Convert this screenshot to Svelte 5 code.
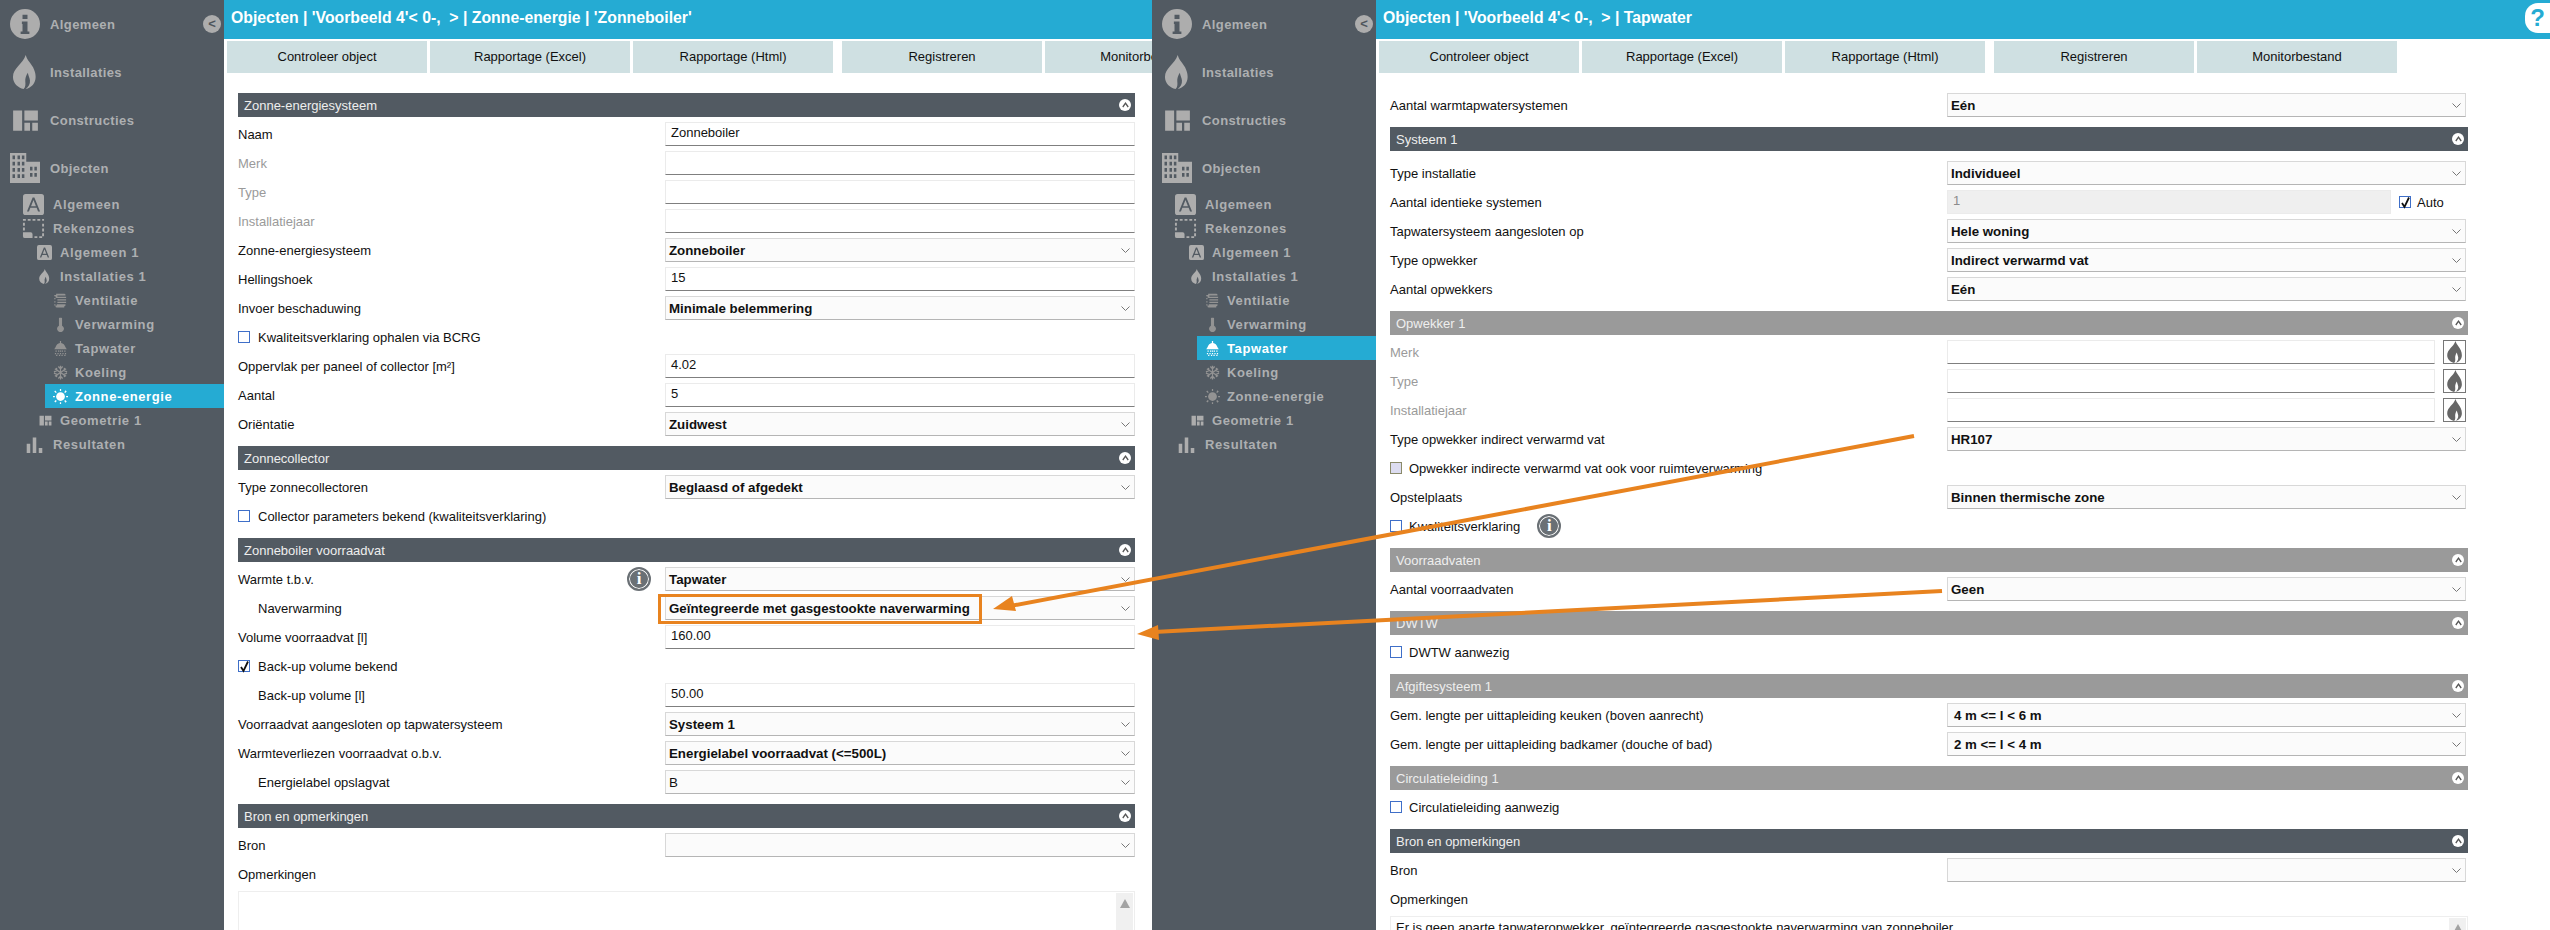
<script>
  const sidebarTop = [
    { label: 'Algemeen', icon: 'info', size: 30 },
    { label: 'Installaties', icon: 'flame', size: 34 },
    { label: 'Constructies', icon: 'constr', size: 27 },
    { label: 'Objecten', icon: 'building', size: 30 }
  ];

  const tree = (active) => [
    { label: 'Algemeen', icon: 'a', size: 21, ix: 23, tx: 53 },
    { label: 'Rekenzones', icon: 'zones', size: 23, ix: 22, tx: 53 },
    { label: 'Algemeen 1', icon: 'a', size: 15, ix: 37, tx: 60 },
    { label: 'Installaties 1', icon: 'flame', size: 15, ix: 37, tx: 60 },
    { label: 'Ventilatie', icon: 'vent', size: 15, ix: 53, tx: 75, dim: true },
    { label: 'Verwarming', icon: 'thermo', size: 15, ix: 53, tx: 75, dim: true },
    { label: 'Tapwater', icon: 'shower', size: 15, ix: 53, tx: 75, dim: true, active: active === 'Tapwater' },
    { label: 'Koeling', icon: 'snow', size: 15, ix: 53, tx: 75, dim: true },
    { label: 'Zonne-energie', icon: 'sun', size: 15, ix: 53, tx: 75, dim: true, active: active === 'Zonne-energie' },
    { label: 'Geometrie 1', icon: 'constr', size: 13, ix: 39, tx: 60 },
    { label: 'Resultaten', icon: 'bars', size: 17, ix: 26, tx: 53 }
  ];

  const tabs = ['Controleer object', 'Rapportage (Excel)', 'Rapportage (Html)', 'Registreren', 'Monitorbestand'];

  const leftRows = [
    { t: 'section', label: 'Zonne-energiesysteem' },
    { t: 'input', label: 'Naam', value: 'Zonneboiler' },
    { t: 'input', label: 'Merk', muted: true },
    { t: 'input', label: 'Type', muted: true },
    { t: 'input', label: 'Installatiejaar', muted: true },
    { t: 'select', label: 'Zonne-energiesysteem', value: 'Zonneboiler' },
    { t: 'input', label: 'Hellingshoek', value: '15' },
    { t: 'select', label: 'Invoer beschaduwing', value: 'Minimale belemmering' },
    { t: 'check', label: 'Kwaliteitsverklaring ophalen via BCRG' },
    { t: 'input', label: 'Oppervlak per paneel of collector [m²]', value: '4.02' },
    { t: 'input', label: 'Aantal', value: '5' },
    { t: 'select', label: 'Oriëntatie', value: 'Zuidwest' },
    { t: 'section', label: 'Zonnecollector' },
    { t: 'select', label: 'Type zonnecollectoren', value: 'Beglaasd of afgedekt' },
    { t: 'check', label: 'Collector parameters bekend (kwaliteitsverklaring)' },
    { t: 'section', label: 'Zonneboiler voorraadvat' },
    { t: 'select', label: 'Warmte t.b.v.', value: 'Tapwater', info: true },
    { t: 'select', label: 'Naverwarming', value: 'Geïntegreerde met gasgestookte naverwarming', indent: true, mark: true },
    { t: 'input', label: 'Volume voorraadvat [l]', value: '160.00' },
    { t: 'check', label: 'Back-up volume bekend', checked: true },
    { t: 'input', label: 'Back-up volume [l]', value: '50.00', indent: true },
    { t: 'select', label: 'Voorraadvat aangesloten op tapwatersysteem', value: 'Systeem 1' },
    { t: 'select', label: 'Warmteverliezen voorraadvat o.b.v.', value: 'Energielabel voorraadvat (<=500L)' },
    { t: 'select', label: 'Energielabel opslagvat', value: 'B', indent: true, plain: true },
    { t: 'section', label: 'Bron en opmerkingen' },
    { t: 'select', label: 'Bron', value: '' },
    { t: 'text', label: 'Opmerkingen' }
  ];

  const rightRows = [
    { t: 'select', label: 'Aantal warmtapwatersystemen', value: 'Eén' },
    { t: 'section', label: 'Systeem 1', extra: true },
    { t: 'select', label: 'Type installatie', value: 'Individueel' },
    { t: 'auto', label: 'Aantal identieke systemen', value: '1' },
    { t: 'select', label: 'Tapwatersysteem aangesloten op', value: 'Hele woning' },
    { t: 'select', label: 'Type opwekker', value: 'Indirect verwarmd vat' },
    { t: 'select', label: 'Aantal opwekkers', value: 'Eén' },
    { t: 'section', label: 'Opwekker 1', grey: true },
    { t: 'flame', label: 'Merk', muted: true },
    { t: 'flame', label: 'Type', muted: true },
    { t: 'flame', label: 'Installatiejaar', muted: true },
    { t: 'select', label: 'Type opwekker indirect verwarmd vat', value: 'HR107' },
    { t: 'check', label: 'Opwekker indirecte verwarmd vat ook voor ruimteverwarming', disabled: true },
    { t: 'select', label: 'Opstelplaats', value: 'Binnen thermische zone' },
    { t: 'check', label: 'Kwaliteitsverklaring', info: true },
    { t: 'section', label: 'Voorraadvaten', grey: true },
    { t: 'select', label: 'Aantal voorraadvaten', value: 'Geen' },
    { t: 'section', label: 'DWTW', grey: true },
    { t: 'check', label: 'DWTW aanwezig' },
    { t: 'section', label: 'Afgiftesysteem 1', grey: true },
    { t: 'select', label: 'Gem. lengte per uittapleiding keuken (boven aanrecht)', value: '4 m <= l < 6 m', pad: true },
    { t: 'select', label: 'Gem. lengte per uittapleiding badkamer (douche of bad)', value: '2 m <= l < 4 m', pad: true },
    { t: 'section', label: 'Circulatieleiding 1', grey: true },
    { t: 'check', label: 'Circulatieleiding aanwezig' },
    { t: 'section', label: 'Bron en opmerkingen' },
    { t: 'select', label: 'Bron', value: '' },
    { t: 'text', label: 'Opmerkingen', value: 'Er is geen aparte tapwateropwekker, geïntegreerde gasgestookte naverwarming van zonneboiler' }
  ];

  const panels = [
    { cls: 'left', title: "Objecten | 'Voorbeeld 4'< 0-,  > | Zonne-energie | 'Zonneboiler'", active: 'Zonne-energie', rows: leftRows },
    { cls: 'right', title: "Objecten | 'Voorbeeld 4'< 0-,  > | Tapwater", active: 'Tapwater', rows: rightRows, help: true }
  ];
</script>

{#snippet icon(name, size)}
  <svg class="ico" width={size} height={size} viewBox="0 0 24 24" aria-hidden="true">
    {#if name === 'info'}
      <path fill-rule="evenodd" d="M12 0a12 12 0 1 0 0 24 12 12 0 0 0 0-24zM10 4.500h4v3.500h-4zM9.500 10h4.500v8h1.500v2h-7v-2h1.500v-6h-.5z"/>
    {:else if name === 'flame'}
      <path d="M12.500 0c1 4 4.500 6.500 5.800 10 .8 1.800 1.200 3.500 1.200 5.500 0 4.500-3 7.500-7 8.500 2-1.500 3.200-3.500 3-6-.2-2-1.200-3.500-1.500-5.500-1.200 2-2 4-1.800 6 .2 2.300.3 4-1.200 5.500-4-1-7.500-4-7.500-8.500 0-6.500 7-9 9-15.500z"/>
    {:else if name === 'constr'}
      <path d="M1 3h8v18H1zM11 3h12v9H11zM11 14h5v7h-5zM18 14h5v7h-5z"/>
    {:else if name === 'building'}
      <path fill-rule="evenodd" d="M0 0h13v7h11v17H0zM2 2v3h2V2zm4 0v3h2V2zm3.500 0v3h2V2zM2 7v3h2V7zm4 0v3h2V7zm3.500 0v3h2V7zM2 12v3h2v-3zm4 0v3h2v-3zm3.500 0v3h2v-3zM2 17v3h2v-3zm4 0v3h2v-3zm3.500 0v3h2v-3zM16 11v3h2v-3zm3.500 0v3h2v-3zM16 16v3h2v-3zm3.500 0v3h2v-3z"/>
    {:else if name === 'a'}
      <path fill-rule="evenodd" d="M3 0h18a3 3 0 0 1 3 3v18a3 3 0 0 1-3 3H3a3 3 0 0 1-3-3V3a3 3 0 0 1 3-3zm8 4L4.500 20h2.300l1.600-4.200h7.200l1.600 4.200h2.300L13 4zm1 2.800 2.800 7.100H9.200z"/>
    {:else if name === 'zones'}
      <path d="M1 2h3v2H1zM6 2h3v2H6zM11 2h3v2h-3zM16 2h3v2h-3zM21 2h2v2h-2zM1 6h2v3H1zM21 7h2v3h-2zM1 11h2v3H1zM21 12h2v3h-2zM21 17h2v3h-2zM1 16h8a2 2 0 0 1 2 2v4H3a2 2 0 0 1-2-2zM13 20h3v2h-3zM18 20h3v2h-3z"/>
    {:else if name === 'vent'}
      <path d="M5 1h13a2 2 0 0 1 2 2v1H7v2h14v2H6a2 2 0 0 1-2-2V5H2V3h3zM7 10h14v2H7zM2 8h2v2H2zM2 13h2v2H2zM7 14h14v2H7zM2 18h2v2H2zM6 18h14v1a2 2 0 0 1-2 2v2H6a2 2 0 0 1-2-2v-1h2z"/>
    {:else if name === 'thermo'}
      <path d="M10.500 1h3a1 1 0 0 1 1 1v11.800a5.500 5.500 0 1 1-5 0V2a1 1 0 0 1 1-1z"/>
    {:else if name === 'shower'}
      <path d="M11 0h2v3c3 .5 6 3 7 7l2 3H2l2-3c1-4 4-6.500 7-7zM4 15h2v2H4zM8 15h2v2H8zM14 15h2v2h-2zM18 15h2v2h-2zM11 15h2v2h-2zM3 19h2v2H3zM7 19h2v2H7zM11 19h2v2h-2zM15 19h2v2h-2zM19 19h2v2h-2zM5 22h2v2H5zM9.500 22h2v2h-2zM13.500 22h2v2h-2zM18 22h2v2h-2z"/>
    {:else if name === 'snow'}
      <path fill="none" stroke="currentColor" stroke-width="2" d="M12 1v22M3 6l18 12M21 6 3 18M8.500 2.500 12 6l3.500-3.500M8.500 21.500 12 18l3.500 3.500M1.500 11l5 -2-1-4.500M22.500 11l-5-2 1-4.500M1.500 13l5 2-1 4.500M22.500 13l-5 2 1 4.500"/>
    {:else if name === 'sun'}
      <circle cx="12" cy="12" r="7"/>
      <path d="M11 0h2v3h-2zM11 21h2v3h-2zM0 11h3v2H0zM21 11h3v2h-3zM3.500 2.500 6 5 4.500 6.500 2 4zM20 2 22 4l-2.500 2.500L18 5zM4.500 17.500 6 19l-2 2.500-2-2zM19.500 17.500 22 20l-2 2-2-3z"/>
    {:else if name === 'bars'}
      <path d="M1 11h5v13H1zM9.500 2h5v22h-5zM18 17h5v7h-5z"/>
    {/if}
  </svg>
{/snippet}

{#snippet infoBadge()}
  <span class="info-badge">i</span>
{/snippet}

{#snippet control(row)}
  {#if row.t === 'input'}
    <div class="input">{row.value ?? ''}</div>
  {:else if row.t === 'select'}
    <div class="select" class:pad={row.pad} class:plain={row.plain}>
      <span>{row.value}</span>
      <svg class="chev" width="9" height="5" viewBox="0 0 9 5"><path d="M.5.500 4.500 4.500 8.500.5" fill="none" stroke="#777"/></svg>
      {#if row.mark}<i class="mark"></i>{/if}
    </div>
  {/if}
{/snippet}

<div class="screen">
  {#each panels as p}
    <section class="panel {p.cls}">
      <nav class="side">
        <div class="top">
          {#each sidebarTop as item, i}
            <div class="top-item {item.icon}">
              <span class="top-ico">{@render icon(item.icon, item.size)}</span>
              <span>{item.label}</span>
              {#if i === 0}<span class="collapse">&lt;</span>{/if}
            </div>
          {/each}
        </div>
        <div class="tree">
          {#each tree(p.active) as n}
            <div class="node" class:active={n.active} class:dim={n.dim} style="--ix:{n.ix}px">
              <span class="node-ico" style="width:{n.tx - n.ix}px">{@render icon(n.icon, n.size)}</span>
              <span class="node-label">{n.label}</span>
            </div>
          {/each}
        </div>
      </nav>
      <main class="main">
        <header class="title">
          <span>{p.title}</span>
          {#if p.help}<span class="help">?</span>{/if}
        </header>
        <div class="tabs">
          {#each tabs as tab, i}
            <div class="tab" class:gap={i === 3}>{tab}</div>
          {/each}
        </div>
        <div class="form">
          {#each p.rows as row}
            {#if row.t === 'section'}
              <div class="bar" class:grey={row.grey} class:extra={row.extra}>
                <span>{row.label}</span>
                <span class="chevup"><svg width="7" height="6" viewBox="0 0 7 6"><path d="M.8 5 3.500 1.200 6.200 5" fill="none" stroke="#555" stroke-width="1.300"/></svg></span>
              </div>
            {:else if row.t === 'check'}
              <div class="row check-row">
                <span class="box" class:disabled={row.disabled} class:on={row.checked}>{#if row.checked}<svg width="9" height="13" viewBox="0 0 9 13"><path d="M1 7 3.500 11 8 1.500" fill="none" stroke="#111" stroke-width="1.800"/></svg>{/if}</span>
                <span class="lbl">{row.label}</span>
                {#if row.info}{@render infoBadge()}{/if}
              </div>
            {:else if row.t === 'text'}
              <div class="row"><span class="lbl">{row.label}</span></div>
              <div class="textarea">
                <span>{row.value ?? ''}</span>
                <span class="scroll"><i></i></span>
              </div>
            {:else}
              <div class="row">
                <span class="lbl" class:muted={row.muted} class:indent={row.indent}>{row.label}</span>
                {#if row.info}<span class="info-slot">{@render infoBadge()}</span>{/if}
                {#if row.t === 'auto'}
                  <div class="ctl split">
                    <div class="input disabled">{row.value}</div>
                    <span class="box on"><svg width="9" height="13" viewBox="0 0 9 13"><path d="M1 7 3.500 11 8 1.500" fill="none" stroke="#111" stroke-width="1.800"/></svg></span>
                    <span class="auto">Auto</span>
                  </div>
                {:else if row.t === 'flame'}
                  <div class="ctl split">
                    <div class="input"></div>
                    <span class="flame-btn">{@render icon('flame', 22)}</span>
                  </div>
                {:else}
                  <div class="ctl">{@render control(row)}</div>
                {/if}
              </div>
            {/if}
          {/each}
        </div>
      </main>
    </section>
  {/each}

  <svg class="arrows" width="2550" height="930" viewBox="0 0 2550 930" aria-hidden="true">
    <path d="M1914 436 1005 607" stroke="#e8831f" stroke-width="4" fill="none"/>
    <path d="M993 609 1012 596 1016 611z" fill="#e8831f"/>
    <path d="M1942 591 1154 632" stroke="#e8831f" stroke-width="4" fill="none"/>
    <path d="M1137 634 1158 625 1159 640z" fill="#e8831f"/>
  </svg>
</div>

<style>
  :global(body) {
    margin: 0;
    background: #fff;
  }
  .screen {
    position: relative;
    display: flex;
    width: 2550px;
    height: 930px;
    overflow: hidden;
    font-family: "Liberation Sans", Arial, sans-serif;
    font-size: 13px;
    color: #111;
  }
  .panel {
    display: flex;
    height: 930px;
    overflow: hidden;
  }
  .panel.left { width: 1152px; flex: none; }
  .panel.right { flex: 1; min-width: 0; }
  .side {
    width: 224px;
    flex: none;
    background: #525a62;
    color: #adafb1;
    font-weight: 700;
    letter-spacing: 0.400px;
    font-size: 13px;
  }
  .ico { fill: #adadad; color: #adadad; display: block; flex: none; }
  .top-item {
    position: relative;
    display: flex;
    align-items: center;
    height: 48px;
  }
  .top-ico {
    width: 50px;
    display: flex;
    justify-content: center;
    flex: none;
  }
  .collapse {
    position: absolute;
    left: 203px;
    top: 15px;
    width: 18px;
    height: 18px;
    border-radius: 50%;
    background: #adadad;
    color: #4d555c;
    font-size: 13px;
    line-height: 17px;
    text-align: center;
    letter-spacing: 0;
  }
  .node {
    display: flex;
    align-items: center;
    height: 24px;
    margin-left: var(--ix);
    letter-spacing: 0.600px;
  }
  .node-ico { display: flex; align-items: center; flex: none; }
  .node.dim .ico { fill: #939393; color: #939393; }
  .node.active {
    background: #25abd3;
    color: #fff;
    margin-left: 45px;
    padding-left: 8px;
  }
  .node.active .ico { fill: #fff; color: #fff; }
  .main {
    flex: 1;
    min-width: 0;
    overflow: hidden;
  }
  .title {
    position: relative;
    height: 39px;
    background: #25abd3;
    color: #fff;
    font-size: 15.800px;
    font-weight: 700;
    line-height: 36px;
    padding-left: 7px;
    white-space: pre;
  }
  .help {
    position: absolute;
    right: 0;
    top: 3px;
    width: 25px;
    height: 30px;
    border-radius: 13px 0 0 13px;
    background: #fff;
    color: #25abd3;
    font-size: 24px;
    line-height: 30px;
    text-align: center;
  }
  .tabs {
    display: flex;
    gap: 3px;
    padding: 2px 0 0 3px;
    height: 32px;
    white-space: nowrap;
  }
  .tab {
    width: 200px;
    flex: none;
    background: #cfe0e2;
    text-align: center;
    line-height: 32px;
  }
  .tab.gap { margin-left: 6px; }
  .form {
    display: flex;
    flex-direction: column;
    padding: 20px 0 0 14px;
  }
  .left .form { width: 897px; }
  .right .form { width: 1078px; }
  .bar {
    display: flex;
    flex: none;
    justify-content: space-between;
    align-items: center;
    height: 24px;
    margin: 5px 0;
    padding: 0 4px 0 6px;
    background: #525a62;
    color: #eee;
  }
  .form > .bar:first-child { margin-top: 0; }
  .bar.grey { background: #9a9a9a; }
  .bar.extra { margin-bottom: 10px; }
  .chevup {
    width: 12px;
    height: 12px;
    border-radius: 50%;
    background: #fff;
    display: flex;
    align-items: center;
    justify-content: center;
  }
  .row {
    display: flex;
    flex: none;
    align-items: center;
    position: relative;
    height: 24px;
    margin-bottom: 5px;
  }
  .lbl { white-space: nowrap; }
  .lbl.muted { color: #9a9a9a; }
  .lbl.indent { padding-left: 20px; }
  .ctl {
    position: absolute;
    left: 427px;
    right: 0;
    top: 0;
    height: 24px;
  }
  .right .ctl { left: 557px; right: 2px; }
  .split { display: flex; align-items: center; }
  .input {
    box-sizing: border-box;
    height: 24px;
    flex: 1;
    border: 1px solid #ebebeb;
    border-bottom: 1px solid #7f7f7f;
    background: #fff;
    padding: 0 5px;
    line-height: 20px;
  }
  .input.disabled {
    flex: none;
    width: 444px;
    background: #efefef;
    color: #8c8c8c;
    border-bottom-color: #ebebeb;
  }
  .select {
    position: relative;
    box-sizing: border-box;
    display: flex;
    justify-content: space-between;
    align-items: center;
    height: 24px;
    border: 1px solid #d8d8d8;
    border-bottom-color: #b5b5b5;
    background: #fbfbfb;
    padding: 0 4px 0 3px;
    font-size: 13.300px;
    font-weight: 700;
  }
  .select.plain { font-weight: 400; }
  .select.pad { padding-left: 6px; }
  .mark {
    position: absolute;
    left: -8px;
    top: -3px;
    width: 318px;
    height: 24px;
    border: 3px solid #e8831f;
    pointer-events: none;
  }
  .check-row { gap: 8px; }
  .right .check-row { gap: 7px; }
  .box {
    box-sizing: border-box;
    width: 12px;
    height: 12px;
    flex: none;
    border: 1px solid #3f6fc8;
    background: #fff;
    display: inline-flex;
    align-items: center;
    justify-content: center;
    overflow: visible;
  }
  .box.disabled {
    background: #dcdcf0;
    border-color: #8a8a6a;
  }
  .auto { margin-left: 6px; }
  .split .box { margin-left: 8px; }
  .flame-btn {
    box-sizing: border-box;
    width: 23px;
    height: 24px;
    flex: none;
    margin-left: 8px;
    border: 1px solid #777;
    display: flex;
    align-items: center;
    justify-content: center;
  }
  .flame-btn .ico { fill: #666; }
  .info-slot {
    position: absolute;
    left: 389px;
    top: 0;
  }
  .info-badge {
    box-sizing: border-box;
    display: inline-flex;
    align-items: center;
    justify-content: center;
    width: 24px;
    height: 24px;
    border-radius: 50%;
    background: #6a7075;
    border: 2px solid #6a7075;
    box-shadow: inset 0 0 0 1px #fff;
    color: #fff;
    font-family: "Liberation Serif", serif;
    font-weight: 700;
    font-size: 17px;
  }
  .check-row .info-badge { margin-left: 10px; }
  .textarea {
    position: relative;
    flex: none;
    box-sizing: border-box;
    height: 80px;
    border: 1px solid #eee;
    padding: 3px 5px;
  }
  .scroll {
    position: absolute;
    right: 1px;
    top: 1px;
    bottom: 0;
    width: 17px;
    background: #f0f0f0;
  }
  .scroll i {
    position: absolute;
    left: 4px;
    top: 6px;
    width: 0;
    height: 0;
    border: 5px solid transparent;
    border-top: 0;
    border-bottom: 9px solid #a3a3a3;
  }
  .arrows {
    position: absolute;
    left: 0;
    top: 0;
    pointer-events: none;
  }
</style>
